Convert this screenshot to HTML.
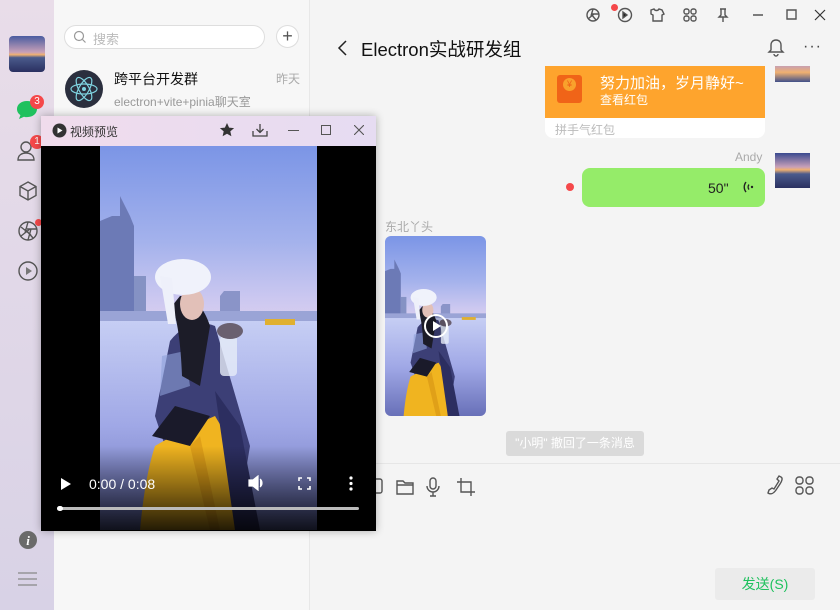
<!DOCTYPE html>
<html><head><meta charset="utf-8"><style>
*{margin:0;padding:0;box-sizing:border-box}
body{width:840px;height:610px;overflow:hidden;position:relative;background:#f4f4f4;font-family:"Liberation Sans","Noto Sans CJK SC",sans-serif;}
.abs{position:absolute}
.sb{left:0;top:0;width:54px;height:610px;background:linear-gradient(#e9dde9,#d8d2e6)}
.list{left:54px;top:0;width:256px;height:610px;background:#f7f7f7;border-right:1px solid #e8e8e8}
.badge{background:#f5484a;color:#fff;border-radius:50%;width:14px;height:14px;font-size:10px;text-align:center;line-height:14px}
svg{display:block}
.ic{stroke:#555;fill:none;stroke-width:1.4}
</style></head><body>
<svg width="0" height="0" style="position:absolute"><defs>
<linearGradient id="sky" x1="0" y1="0" x2="0" y2="1"><stop offset="0" stop-color="#7b95e6"/><stop offset=".25" stop-color="#a4b2ec"/><stop offset=".4" stop-color="#ccc8f0"/><stop offset=".47" stop-color="#dcd0ee"/></linearGradient>
<linearGradient id="ice" x1="0" y1="0" x2="0" y2="1"><stop offset="0" stop-color="#c6cef4"/><stop offset=".5" stop-color="#a0a8e6"/><stop offset="1" stop-color="#6870b8"/></linearGradient>
<linearGradient id="fade" x1="0" y1="0" x2="0" y2="1"><stop offset="0" stop-color="#000" stop-opacity="0"/><stop offset="1" stop-color="#000" stop-opacity=".85"/></linearGradient>
<g id="scene">
<rect width="217" height="384" fill="url(#sky)"/>
<path d="M0 75 L12 70 L20 70 L20 50 L30 70 L34 80 L34 170 L0 170Z" fill="#6c7ab6"/>
<rect x="34" y="130" width="12" height="40" fill="#8592c4"/>
<path d="M120 150 L124 145 L140 145 L140 170 L120 170Z" fill="#8a94c8"/>
<rect x="0" y="165" width="217" height="12" fill="#9aa4d6"/>
<rect x="0" y="175" width="217" height="209" fill="url(#ice)"/>
<rect x="165" y="173" width="30" height="6" fill="#e0b030"/>
<path d="M70 195 Q90 170 115 180 L150 300 L145 330 L65 300 L55 270 Z" fill="#3c3f76"/>
<path d="M62 210 L85 205 L90 240 L60 250Z" fill="#8ea0d8" opacity=".6"/>
<path d="M72 160 Q80 180 82 230 L100 240 L110 180 Q100 150 80 150Z" fill="#1c1c28"/>
<ellipse cx="92" cy="158" rx="12" ry="16" fill="#e2c0b8"/>
<ellipse cx="83" cy="131" rx="28" ry="18" fill="#f0f2fb"/>
<path d="M60 130 L68 178 L76 178 L72 132Z" fill="#eef0fa"/>
<path d="M55 300 Q80 285 115 270 L130 295 L135 384 L40 384 Q45 330 55 300Z" fill="#f0b420"/>
<path d="M90 300 L110 384 L120 384 L100 290Z" fill="#e0a018"/>
<path d="M52 290 L75 260 L110 270 L90 300Z" fill="#1a1a2a"/>
<rect x="120" y="190" width="17" height="40" rx="4" fill="#e6ecf8" opacity=".8"/>
<ellipse cx="130" cy="185" rx="13" ry="8" fill="#6a6070"/>
<path d="M115 245 L140 280 L160 384 L135 384Z" fill="#2c2e60"/>
</g></defs></svg>

<!-- sidebar -->
<div class="abs sb"></div>
<div class="abs" style="left:9px;top:36px;width:36px;height:36px;border-radius:4px;overflow:hidden;background:linear-gradient(#4a5ca0 0%,#c8a0b8 45%,#f0b070 52%,#4a5a8c 60%,#2a3060 100%)"></div>
<svg class="abs" style="left:16px;top:100px" width="22" height="20"><path d="M11 1C5 1 1 4.5 1 9c0 2.6 1.3 4.7 3.4 6.1L3 19l5-2.3c1 .3 2 .4 3 .4 6 0 10-3.6 10-8.1S17 1 11 1z" fill="#1fc15e"/></svg>
<div class="abs badge" style="left:30px;top:95px">3</div>
<svg class="abs" style="left:17px;top:140px" width="22" height="22"><circle cx="9" cy="7" r="5" class="ic" stroke="#777"/><path d="M1 20c0-5 4-7 8-7s8 2 8 7z" class="ic" stroke="#777"/></svg>
<div class="abs badge" style="left:30px;top:135px">1</div>
<svg class="abs" style="left:17px;top:180px" width="22" height="22"><path d="M11 2l8 4.5v9L11 20l-8-4.5v-9z M3 6.5L11 11l8-4.5 M11 11v9" class="ic" stroke="#777"/></svg>
<svg class="abs" style="left:17px;top:220px" width="22" height="22"><circle cx="11" cy="11" r="9" class="ic" stroke="#777"/><path d="M11 2L8 13M20 9l-10 0M16 18L8 9M4 16l9-7M4 7l10 8M11 20l3-11" class="ic" stroke="#777" stroke-width="1"/></svg>
<div class="abs" style="left:35px;top:219px;width:7px;height:7px;border-radius:50%;background:#f5484a"></div>
<svg class="abs" style="left:17px;top:260px" width="22" height="22"><circle cx="11" cy="11" r="9" class="ic" stroke="#777"/><path d="M9 7l6 4-6 4z" fill="#777"/></svg>
<svg class="abs" style="left:18px;top:530px" width="20" height="20"><circle cx="10" cy="10" r="9" fill="#6a6a6a"/><text x="10" y="15" text-anchor="middle" font-size="13" font-weight="bold" font-style="italic" fill="#fff" font-family="Liberation Serif">i</text></svg>
<svg class="abs" style="left:18px;top:572px" width="20" height="14"><path d="M0 1h19M0 7h19M0 13h19" stroke="#888" stroke-width="1.3"/></svg>

<!-- list -->
<div class="abs list"></div>
<div class="abs" style="left:64px;top:25px;width:201px;height:24px;border:1px solid #dedede;border-radius:12px;background:#fff"></div>
<svg class="abs" style="left:73px;top:30px" width="14" height="14"><circle cx="6" cy="6" r="4.5" stroke="#999" fill="none" stroke-width="1.2"/><path d="M9.5 9.5l3 3" stroke="#999" stroke-width="1.2"/></svg>
<div class="abs" style="left:93px;top:29px;font-size:13px;color:#bbb">搜索</div>
<div class="abs" style="left:276px;top:25px;width:23px;height:23px;border:1px solid #ddd;border-radius:50%;background:#fff;text-align:center;line-height:20px;font-size:18px;color:#555">+</div>
<svg class="abs" style="left:65px;top:70px" width="38" height="38"><circle cx="19" cy="19" r="19" fill="#2b2f3e"/><g stroke="#7fd3e0" fill="none" stroke-width="1.2"><ellipse cx="19" cy="19" rx="13" ry="5"/><ellipse cx="19" cy="19" rx="13" ry="5" transform="rotate(60 19 19)"/><ellipse cx="19" cy="19" rx="13" ry="5" transform="rotate(-60 19 19)"/></g><circle cx="19" cy="19" r="2" fill="#7fd3e0"/></svg>
<div class="abs" style="left:114px;top:69px;font-size:14px;color:#111">跨平台开发群</div>
<div class="abs" style="left:276px;top:70px;font-size:12px;color:#aaa">昨天</div>
<div class="abs" style="left:114px;top:93px;font-size:12px;color:#999">electron+vite+pinia聊天室</div>

<!-- top bar -->
<svg class="abs" style="left:585px;top:7px" width="230" height="16"><g class="ic" stroke="#222" stroke-width="1.2"><circle cx="8" cy="8" r="6"/><path d="M8 2L6 9M14 7H7M11 13L6 7M3 12l6-5"/><circle cx="40" cy="8" r="6.5"/><path d="M38 5l4 3-4 3z" fill="#222"/><path d="M66 3l3-1c1 2 4 2 5 0l3 1 2 4-2 1v6h-9V8l-2-1z"/><rect x="99" y="2" width="5" height="5" rx="2"/><rect x="106" y="2" width="5" height="5" rx="2"/><rect x="99" y="9" width="5" height="5" rx="2"/><rect x="106" y="9" width="5" height="5" rx="2"/><path d="M135 2h6M136 2v6l-2 2h8l-2-2V2M138 10v5"/><path d="M168 8h10M202 3h9v9h-9z"/></g></svg>
<div class="abs" style="left:611px;top:4px;width:7px;height:7px;border-radius:50%;background:#f5484a"></div>
<svg class="abs" style="left:814px;top:9px" width="12" height="12"><path d="M1 1l10 10M11 1L1 11" stroke="#333" stroke-width="1.2"/></svg>
<svg class="abs" style="left:337px;top:39px" width="12" height="18"><path d="M9 2L2 9l7 7" stroke="#222" fill="none" stroke-width="1.5"/></svg>
<div class="abs" style="left:361px;top:36px;font-size:18.5px;color:#111">Electron实战研发组</div>
<svg class="abs" style="left:766px;top:38px" width="20" height="20"><path d="M10 2c-3.5 0-5 2.5-5 5v5l-2 2h14l-2-2V7c0-2.5-1.5-5-5-5zM8 16a2 2 0 004 0" class="ic" stroke="#333"/></svg>
<div class="abs" style="left:803px;top:38px;font-size:16px;color:#444;letter-spacing:1px">···</div>

<!-- red packet -->
<div class="abs" style="left:545px;top:66px;width:220px;height:72px;background:#fff;border-radius:0 0 8px 8px;overflow:hidden">
<div style="height:52px;background:#fea42d"></div></div>
<div class="abs" style="left:557px;top:75px;width:25px;height:28px;background:#f06418;border-radius:3px"></div>
<div class="abs" style="left:563px;top:78px;width:13px;height:13px;border-radius:50%;background:#f9a22c;font-size:9px;color:#f06418;text-align:center;line-height:13px">¥</div>
<div class="abs" style="left:600px;top:72px;font-size:15px;color:#fff">努力加油，岁月静好~</div>
<div class="abs" style="left:600px;top:91px;font-size:12px;color:#fff">查看红包</div>
<div class="abs" style="left:555px;top:121px;font-size:12px;color:#bbb">拼手气红包</div>
<div class="abs" style="left:775px;top:66px;width:35px;height:16px;background:linear-gradient(#c8a0b0,#f0b070 40%,#40508a)"></div>

<!-- voice -->
<div class="abs" style="left:735px;top:150px;font-size:12px;color:#aaa">Andy</div>
<div class="abs" style="left:775px;top:153px;width:35px;height:35px;background:linear-gradient(#3a4a90 0%,#c8a0b8 40%,#f0b070 48%,#4a5a8c 60%,#2a3060 100%)"></div>
<div class="abs" style="left:582px;top:168px;width:183px;height:39px;background:#95ec69;border-radius:8px"></div>
<div class="abs" style="left:566px;top:183px;width:8px;height:8px;border-radius:50%;background:#f5484a"></div>
<div class="abs" style="left:708px;top:180px;font-size:14px;color:#222">50"</div>
<svg class="abs" style="left:740px;top:180px" width="14" height="14"><path d="M6 2a8 8 0 000 10M9 4.5a4 4 0 000 5" stroke="#222" fill="none" stroke-width="1.4"/><circle cx="12" cy="7" r="1.2" fill="#222"/></svg>

<!-- video message -->
<div class="abs" style="left:385px;top:218px;font-size:12px;color:#aaa">东北丫头</div>
<div class="abs" style="left:385px;top:236px;width:101px;height:180px;border-radius:6px;overflow:hidden">
<svg width="101" height="180" viewBox="0 0 217 384" preserveAspectRatio="none"><use href="#scene"/></svg></div>
<svg class="abs" style="left:423px;top:313px" width="26" height="26"><circle cx="13" cy="13" r="11" stroke="#fff" stroke-width="2" fill="rgba(0,0,0,.15)"/><path d="M10 8l8 5-8 5z" fill="#fff"/></svg>

<div class="abs" style="left:506px;top:431px;width:138px;height:25px;background:#dadada;border-radius:3px;font-size:12px;color:#fff;text-align:center;line-height:25px">"小明" 撤回了一条消息</div>
<div class="abs" style="left:310px;top:463px;width:530px;height:1px;background:#e6e6e6"></div>

<!-- toolbar -->
<svg class="abs" style="left:370px;top:476px" width="110" height="22"><g class="ic" stroke="#444" stroke-width="1.3"><rect x="0" y="3" width="12" height="14" rx="2"/><path d="M27 5h6l2 2h8v11H27z M27 9h16"/><rect x="60" y="2" width="6" height="11" rx="3"/><path d="M57 10a6 6 0 0012 0M63 16v4M60 20h6"/><path d="M91 2v14h14M87 6h14v14"/></g></svg>
<svg class="abs" style="left:764px;top:475px" width="54" height="22"><g class="ic" stroke="#444" stroke-width="1.3"><path d="M4 18c3 2 6 0 8-3l4-6c2-3 3-6 1-7l-2-1-2 3 2 2-5 8-2-1-3 2z"/><rect x="32" y="2" width="7" height="7" rx="3"/><rect x="42" y="2" width="7" height="7" rx="3"/><rect x="32" y="12" width="7" height="7" rx="3"/><rect x="42" y="12" width="7" height="7" rx="3"/></g></svg>
<div class="abs" style="left:715px;top:568px;width:100px;height:32px;background:#ebebeb;border-radius:3px;font-size:14px;color:#1fc15e;text-align:center;line-height:32px">发送(S)</div>

<!-- video preview window -->
<div class="abs" style="left:41px;top:116px;width:335px;height:415px;background:#000;box-shadow:0 0 8px rgba(0,0,0,.3)">
<div style="height:30px;background:linear-gradient(90deg,#f0dcec,#e6dcf2)"></div>
<div style="position:absolute;left:59px;top:30px;width:217px;height:384px"><svg width="217" height="384"><use href="#scene"/><rect y="300" width="217" height="84" fill="url(#fade)"/></svg></div>
</div>
<svg class="abs" style="left:52px;top:123px" width="15" height="15"><circle cx="7.5" cy="7.5" r="7" fill="#333"/><path d="M5.5 4.5l5 3-5 3z" fill="#fff"/></svg>
<div class="abs" style="left:70px;top:123px;font-size:12px;color:#333">视频预览</div>
<svg class="abs" style="left:219px;top:122px" width="16" height="16"><path d="M8 1l2.1 4.6 5 .5-3.8 3.3 1.1 4.9L8 11.8 3.6 14.3l1.1-4.9L.9 6.1l5-.5z" fill="#333"/></svg>
<svg class="abs" style="left:252px;top:123px" width="16" height="14"><path d="M8 1v8M4.5 6L8 9.5 11.5 6M1 8v5h14V8" stroke="#444" fill="none" stroke-width="1.3"/></svg>
<div class="abs" style="left:288px;top:130px;width:11px;height:1px;background:#555"></div>
<div class="abs" style="left:321px;top:125px;width:10px;height:10px;border:1px solid #555"></div>
<svg class="abs" style="left:354px;top:125px" width="10" height="10"><path d="M0 0l10 10M10 0L0 10" stroke="#555" stroke-width="1.1"/></svg>
<svg class="abs" style="left:60px;top:477px" width="12" height="14"><path d="M1 1l10 6-10 6z" fill="#fff"/></svg>
<div class="abs" style="left:89px;top:476px;font-size:14px;color:#fff">0:00 / 0:08</div>
<svg class="abs" style="left:248px;top:475px" width="18" height="16"><path d="M1 5h4l5-4v14l-5-4H1z M12 4a5 5 0 010 8" fill="#fff" stroke="#fff" stroke-width="1.2"/></svg>
<svg class="abs" style="left:298px;top:477px" width="13" height="13"><path d="M1 4V1h3M9 1h3v3M12 9v3H9M4 12H1V9" stroke="#fff" fill="none" stroke-width="1.6"/></svg>
<svg class="abs" style="left:349px;top:476px" width="4" height="15"><circle cx="2" cy="2" r="1.6" fill="#fff"/><circle cx="2" cy="7.5" r="1.6" fill="#fff"/><circle cx="2" cy="13" r="1.6" fill="#fff"/></svg>
<div class="abs" style="left:57px;top:507px;width:302px;height:3px;background:#bbb;border-radius:2px"></div>
<div class="abs" style="left:57px;top:506px;width:6px;height:5px;background:#fff;border-radius:3px"></div>
</body></html>
